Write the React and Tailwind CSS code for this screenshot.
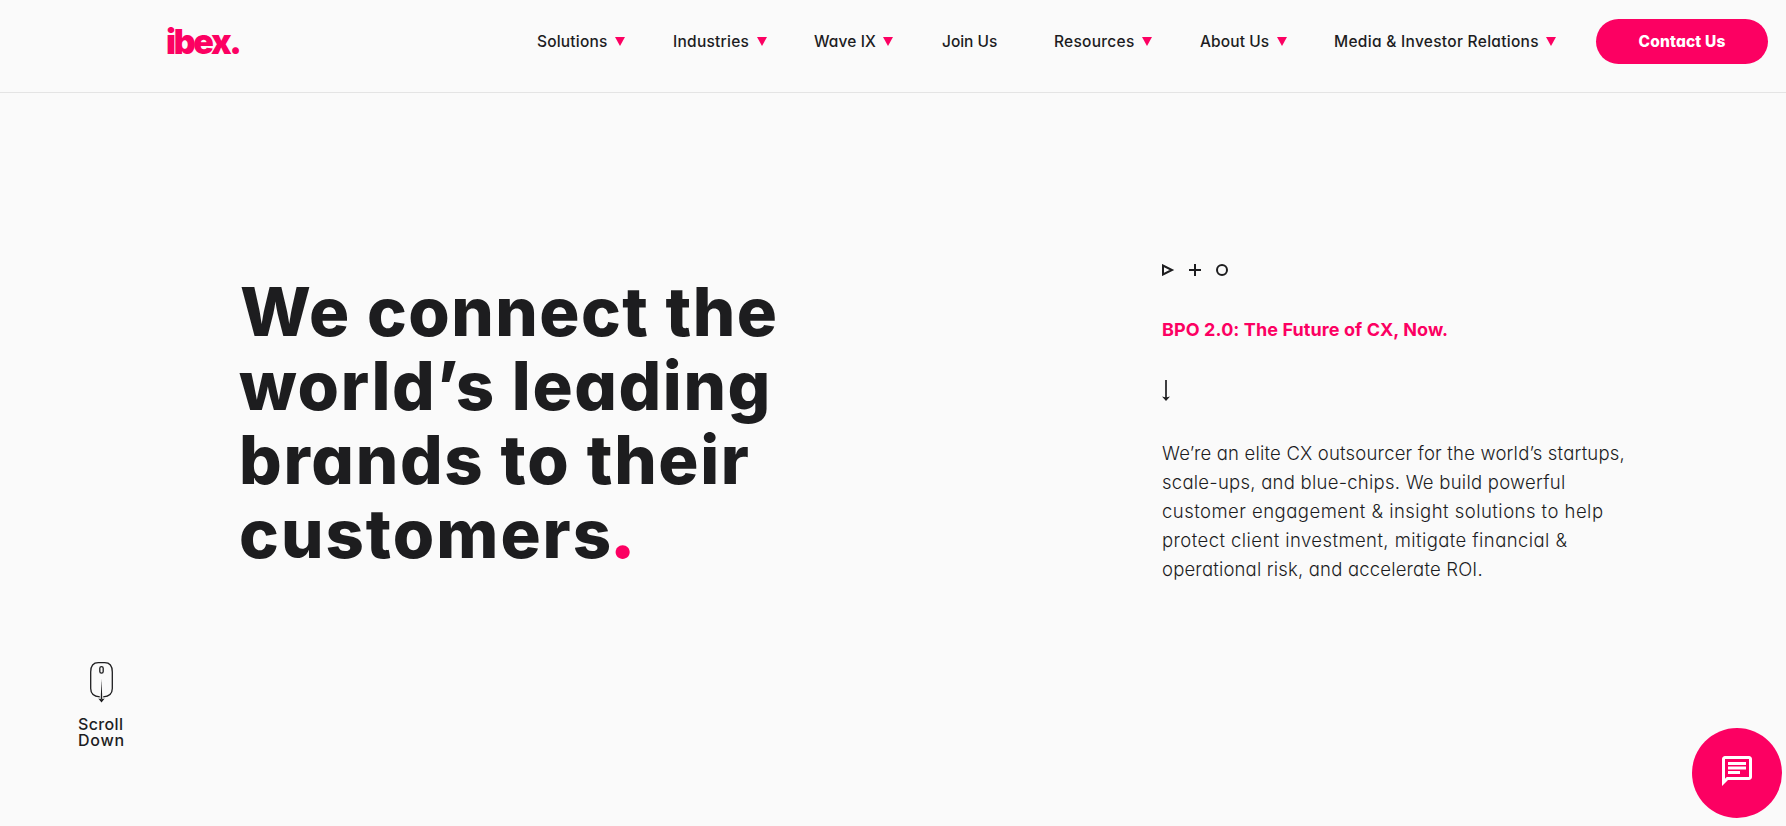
import React from 'react';

const navItems = [
  { label: 'Solutions', width: 'w-[136px]', tracking: 'tracking-[0.19px]', menu: true },
  { label: 'Industries', width: 'w-[141px]', tracking: 'tracking-[0.25px]', menu: true },
  { label: 'Wave IX', width: 'w-[128px]', tracking: 'tracking-[0.1px]', menu: true },
  { label: 'Join Us', width: 'w-[112px]', tracking: 'tracking-[-0.02px]', menu: false },
  { label: 'Resources', width: 'w-[146px]', tracking: 'tracking-[0.28px]', menu: true },
  { label: 'About Us', width: 'w-[134px]', tracking: 'tracking-[0.1px]', menu: true },
  { label: 'Media & Investor Relations', width: 'w-[262px]', tracking: 'tracking-[0.29px]', menu: true },
];

function Header() {
  return (
    <header className="flex h-[93px] items-start border-b border-[#e4e4e4] pt-[19px]">
      {/* Logo */}
      <a href="#" className="ml-[166px] w-[371px] shrink-0 text-[34px] leading-[46px] font-black tracking-[-2.35px] text-[#fc0062]">
        ibex.
      </a>

      {/* Navigation */}
      <nav className="flex h-[45px] shrink-0 items-center">
        {navItems.map((item) => (
          <a key={item.label} href="#" className={`flex shrink-0 items-center whitespace-nowrap ${item.width}`}>
            <span className={`text-[15.5px] leading-6 font-medium ${item.tracking}`}>{item.label}</span>
            {item.menu && (
              <svg className="ml-[7.5px] h-[9px] w-[10px] fill-[#fc0062]" viewBox="0 0 10 9">
                <path d="M0 0h10L5 9z" />
              </svg>
            )}
          </a>
        ))}
      </nav>

      <a
        href="#"
        className="flex h-[45px] w-[172px] shrink-0 items-center justify-center rounded-full bg-[#fc0062] text-[15.5px] font-extrabold tracking-[0.17px] text-white"
      >
        Contact Us
      </a>
    </header>
  );
}

function Hero() {
  return (
    <main className="flex h-[565px] items-start">
      <h1 className="ml-[239px] w-[923px] shrink-0 pt-[181.5px] text-[67px] leading-[74px] font-extrabold whitespace-nowrap">
        <span className="block pl-px tracking-[1.46px]">We connect the</span>
        <span className="block tracking-[1.58px]">world’s leading</span>
        <span className="block tracking-[1.65px]">brands to their</span>
        <span className="block tracking-[2px]">
          customers<span className="-ml-[4px] text-[76px] leading-[0px] text-[#fc0062]">.</span>
        </span>
      </h1>

      <section className="w-[480px] pt-[171px]">
        {/* Play, plus and circle marks */}
        <svg className="h-3 w-[66px] fill-none stroke-[#1d1d1f] stroke-2" viewBox="0 0 66 12">
          <path d="M1 1.5v9L10 6z" />
          <path d="M27 6h12M33 0v12" />
          <circle cx="60" cy="6" r="5" />
        </svg>

        <h2 className="mt-10 text-[18px] leading-7 font-bold tracking-[0.1px] whitespace-nowrap text-[#fc0062]">
          BPO 2.0: The Future of CX, Now.
        </h2>

        <svg className="mt-9 h-[21px] w-2" viewBox="0 0 8 21">
          <path d="M4 0v18" fill="none" stroke="#1d1d1f" strokeWidth="1.7" />
          <path d="M0 16.5L4 17.6l4-1.1L4 21z" fill="#1d1d1f" />
        </svg>

        <p className="mt-[38px] text-[18.5px] leading-[29px] font-light whitespace-nowrap">
          <span className="block tracking-[0.196px]">We’re an elite CX outsourcer for the world’s startups,</span>
          <span className="block tracking-[0.25px]">scale-ups, and blue-chips. We build powerful</span>
          <span className="block tracking-[0.47px]">customer engagement &amp; insight solutions to help</span>
          <span className="block tracking-[0.423px]">protect client investment, mitigate financial &amp;</span>
          <span className="block tracking-[0.18px]">operational risk, and accelerate ROI.</span>
        </p>
      </section>
    </main>
  );
}

function ScrollDown() {
  return (
    <a href="#" className="ml-[78px] block w-[48px] pt-1 text-[16px] leading-4 font-medium">
      <svg className="ml-[11px] h-[41px] w-[25px] fill-none stroke-[#1d1d1f]" viewBox="0 0 25 41">
        <path d="M10.8 34.9C4.8 34.4 1.7 31 1.7 26.5V10C1.7 3.8 4.3.7 9.3.7h6.4c5 0 7.6 3.1 7.6 9.3v16.5c0 4.5-3.1 7.9-9.1 8.4" strokeWidth="1.3" />
        <rect x="10.8" y="4.6" width="3.4" height="6.6" rx="1.7" strokeWidth="1.3" />
        <path d="M12.5 17l.8 20h-1.6z" fill="#1d1d1f" stroke="none" />
        <path d="M9.3 36.4l3.2.8 3.2-.8-3.2 4.1z" fill="#1d1d1f" stroke="none" />
      </svg>
      <span className="mt-[13px] block tracking-[0.37px]">Scroll</span>
      <span className="block tracking-[0.75px]">Down</span>
    </a>
  );
}

function App() {
  return (
    <div className="relative h-[826px] w-[1786px] overflow-hidden bg-[#fafafa] font-['Inter',sans-serif] text-[#1d1d1f] [font-feature-settings:'cv11']">
      <Header />
      <Hero />
      <ScrollDown />

      {/* Chat launcher */}
      <button className="absolute right-1 bottom-2 flex h-[90px] w-[90px] items-center justify-center rounded-full bg-[#fc0062] pb-1">
        <svg className="h-9 w-9 fill-white" viewBox="0 0 24 24">
          <path d="M4 4h16v12H5.17L4 17.17V4m0-2c-1.1 0-1.99.9-1.99 2L2 22l4-4h14c1.1 0 2-.9 2-2V4c0-1.1-.9-2-2-2H4zm2 10h8v2H6v-2zm0-3h12v2H6V9zm0-3h12v2H6V6z" />
        </svg>
      </button>
    </div>
  );
}

export default App;
